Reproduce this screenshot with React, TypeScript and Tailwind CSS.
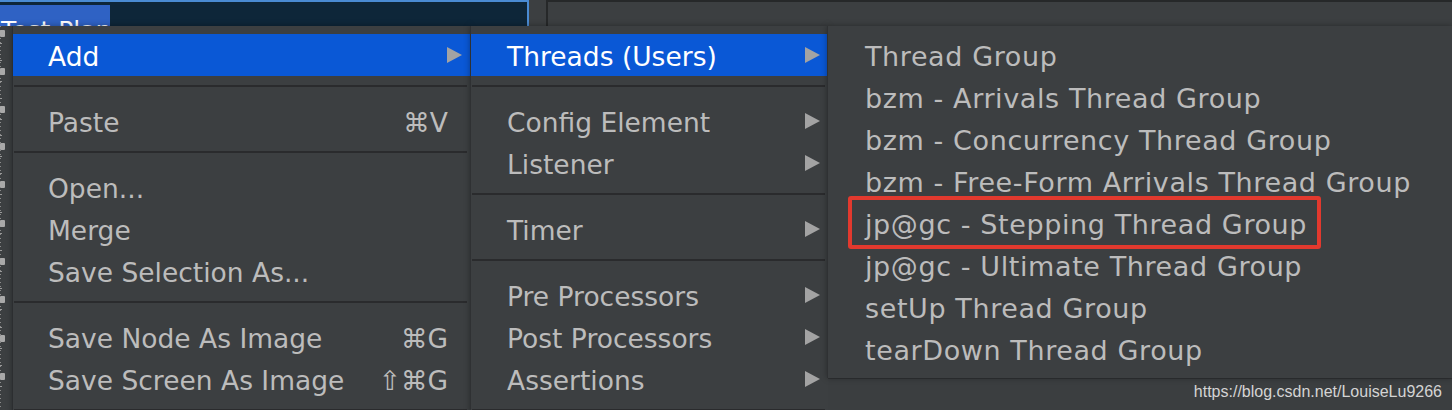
import React from "react";

type Item =
  | { kind: "item"; label: string; shortcut?: string; sub?: boolean; active?: boolean }
  | { kind: "sep" };

const menu1: Item[] = [
  { kind: "item", label: "Add", sub: true, active: true },
  { kind: "sep" },
  { kind: "item", label: "Paste", shortcut: "⌘V" },
  { kind: "sep" },
  { kind: "item", label: "Open..." },
  { kind: "item", label: "Merge" },
  { kind: "item", label: "Save Selection As..." },
  { kind: "sep" },
  { kind: "item", label: "Save Node As Image", shortcut: "⌘G" },
  { kind: "item", label: "Save Screen As Image", shortcut: "⇧⌘G" },
  { kind: "sep" },
];

const menu2: Item[] = [
  { kind: "item", label: "Threads (Users)", sub: true, active: true },
  { kind: "sep" },
  { kind: "item", label: "Config Element", sub: true },
  { kind: "item", label: "Listener", sub: true },
  { kind: "sep" },
  { kind: "item", label: "Timer", sub: true },
  { kind: "sep" },
  { kind: "item", label: "Pre Processors", sub: true },
  { kind: "item", label: "Post Processors", sub: true },
  { kind: "item", label: "Assertions", sub: true },
  { kind: "sep" },
];

const menu3 = [
  "Thread Group",
  "bzm - Arrivals Thread Group",
  "bzm - Concurrency Thread Group",
  "bzm - Free-Form Arrivals Thread Group",
  "jp@gc - Stepping Thread Group",
  "jp@gc - Ultimate Thread Group",
  "setUp Thread Group",
  "tearDown Thread Group",
];

function Arrow() {
  return (
    <svg width="15" height="16" viewBox="0 0 15 16" className="shrink-0">
      <path d="M0 0 L15 8 L0 16 Z" fill="#a3a3a3" />
    </svg>
  );
}

function Sep() {
  return (
    <div className="h-[24px] pt-[9px] pl-[1px] pr-[3px]">
      <div className="h-[2px] bg-[#2a2b2d]" />
    </div>
  );
}

function MenuRows({ items, padLeft }: { items: Item[]; padLeft: string }) {
  return (
    <>
      {items.map((it, i) =>
        it.kind === "sep" ? (
          <Sep key={i} />
        ) : (
          <div
            key={i}
            className={`flex h-[42px] items-center justify-between pr-[8px] ${padLeft} ${
              it.active ? "bg-[#0a58d6] text-white" : "text-[#bcbcbc]"
            }`}
          >
            <span className="whitespace-nowrap pt-[4px]">{it.label}</span>
            {it.sub ? (
              <Arrow />
            ) : it.shortcut ? (
              <span className="mr-[14px] whitespace-nowrap pt-[4px]">{it.shortcut}</span>
            ) : null}
          </div>
        )
      )}
    </>
  );
}

function TreeStrip() {
  const ys = [7, 45, 83, 120, 158, 197, 235, 273, 312, 350];
  return (
    <svg width="12" height="384" viewBox="0 0 12 384">
      <rect x="0" y="0" width="12" height="384" fill="#3c3f41" />
      {Array.from({ length: 96 }).map((_, i) => (
        <rect key={i} x="0" y={i * 4} width="1" height="1" fill="#8a8a8a" />
      ))}
      {ys.map((y, i) => (
        <g key={i}>
          <rect x="0" y={y - 3} width="5" height="7" rx="1" fill="#a9a9a9" />
          <rect x="0" y={y - 11} width="2" height="1" fill="#9a9a9a" />
          <rect x="0" y={y + 10} width="2" height="1" fill="#9a9a9a" />
        </g>
      ))}
    </svg>
  );
}

export default function App() {
  return (
    <div className="relative h-[410px] w-[1452px] overflow-hidden bg-[#3c3f41] font-['DejaVu_Sans',sans-serif] text-[26.5px] leading-[42px]">
      {/* top bar */}
      <div className="flex h-[26px] flex-col">
        <div className="h-[2px] bg-[#3a3c3e]" />
        <div className="h-[1px] bg-[#1c1d1e]" />
        <div className="h-[2px] bg-[#36383a]" />
        <div className="flex flex-1">
          <div className="w-[529px] border-r-2 border-t-2 border-[#4a8bd3] bg-[#0e2639] pt-[3px]">
            <div className="h-full w-[110px] overflow-hidden bg-[#2f62c4] pl-[1px] pt-[7px] text-[25px] leading-[38px] whitespace-nowrap text-white">
              Test Plan
            </div>
          </div>
          <div className="w-[17px] bg-[#3c3f41]" />
          <div className="flex-1 border-l-2 border-t-2 border-[#262829] bg-[#3c3f41]" />
        </div>
      </div>

      {/* body */}
      <div className="flex h-[384px]">
        <TreeStrip />
        <div className="flex-1 bg-[#3c3f41]" />
      </div>

      {/* Menu 1 */}
      <div className="absolute left-[12px] top-[26px] h-[400px] w-[458px] border-l border-[#2c2e30] bg-[#3c3f41] pt-[8px] shadow-[0_0_6px_rgba(0,0,0,0.35)]">
        <MenuRows items={menu1} padLeft="pl-[35px]" />
      </div>

      {/* Menu 2 */}
      <div className="absolute left-[470px] top-[26px] h-[400px] w-[358px] border-l border-[#2f3133] bg-[#3c3f41] pt-[8px] shadow-[0_0_6px_rgba(0,0,0,0.35)]">
        <MenuRows items={menu2} padLeft="pl-[36px]" />
      </div>

      {/* area below menu 3 */}
      <div className="absolute left-[828px] top-[378px] h-[32px] w-[624px] border-t border-[#303234] bg-[#3b3e40]">
        <div className="pr-[10px] pt-[3px] text-right font-['Liberation_Sans',sans-serif] text-[16px] leading-[20px] text-[#d4d4d4]">
          https://blog.csdn.net/LouiseLu9266
        </div>
      </div>

      {/* Menu 3 */}
      <div className="absolute left-[827px] top-[26px] h-[352px] w-[625px] border-l border-[#2f3133] bg-[#3c3f41] py-[8px] text-[27px] tracking-[0.6px] shadow-[0_0_6px_rgba(0,0,0,0.35)]">
        {menu3.map((t) => (
          <div key={t} className="flex h-[42px] items-center whitespace-nowrap pl-[37px] text-[#bcbcbc]">
            <span className="pt-[3px]">{t}</span>
          </div>
        ))}
        <div className="absolute left-[20px] top-[170px] h-[53px] w-[473px] rounded-[3px] border-4 border-[#e2392e]" />
      </div>
    </div>
  );
}
